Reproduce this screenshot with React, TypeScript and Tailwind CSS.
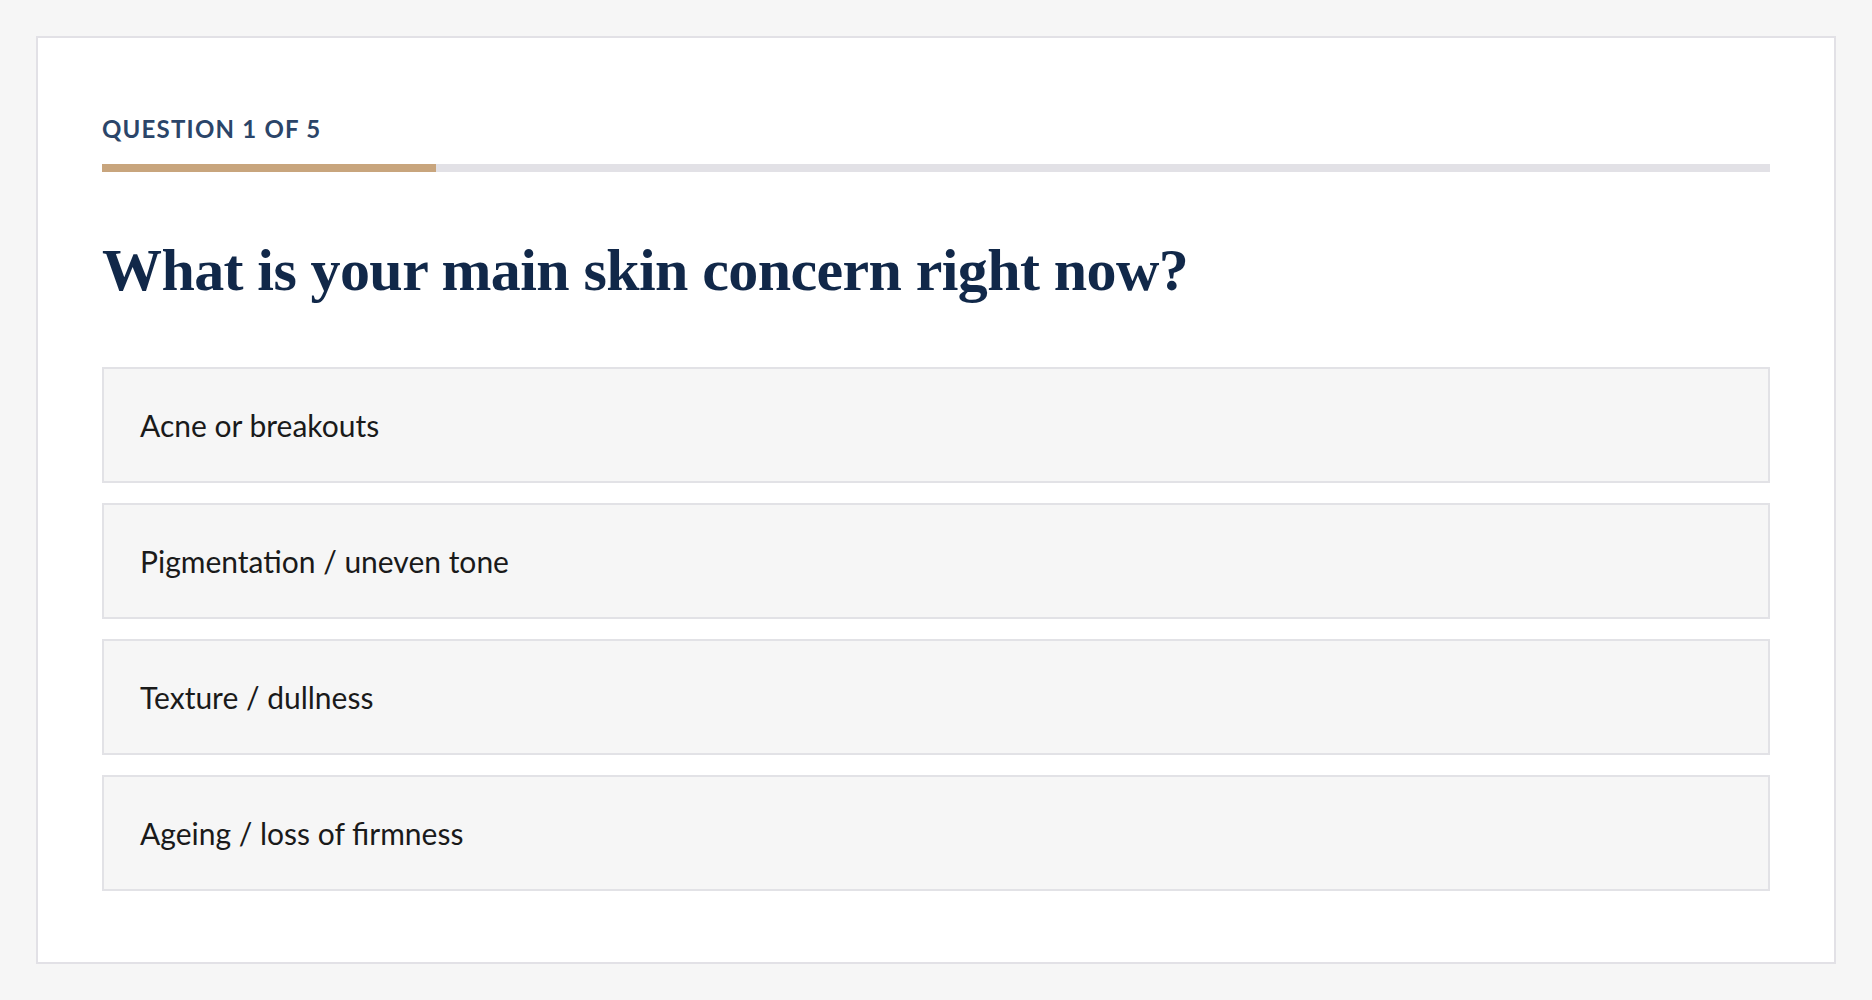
const options = [
  'Acne or breakouts',
  'Pigmentation / uneven tone',
  'Texture / dullness',
  'Ageing / loss of firmness',
];

export default function App() {
  const current = 1;
  const total = 5;

  return (
    <div className="min-h-screen bg-[#f6f6f6] p-9 font-['Lato','Open_Sans',sans-serif]">
      <div className="border-2 border-[#e2e1e6] bg-white px-16 pt-[79px] pb-[71px]">
        <div className="text-[24px] leading-none font-bold tracking-[0.05em] text-[#2b4569]">
          QUESTION {current} OF {total}
        </div>

        <div className="mt-[23px] h-2 bg-[#e2e1e6]">
          <div className="h-full bg-[#c8a57d]" style={{ width: `${(current / total) * 100}%` }} />
        </div>

        <h1 className="mt-[68px] font-['Liberation_Serif',serif] text-[60px] leading-none font-bold tracking-[-0.6px] text-[#112849]">
          What is your main skin concern right now?
        </h1>

        <div className="mt-[67px] flex flex-col gap-5">
          {options.map((option) => (
            <button
              key={option}
              className="flex h-[116px] items-center border-2 border-[#e2e2e6] bg-[#f6f6f6] pl-9 text-left text-[30px] text-[#1a1a1a]"
            >
              {option}
            </button>
          ))}
        </div>
      </div>
    </div>
  );
}
